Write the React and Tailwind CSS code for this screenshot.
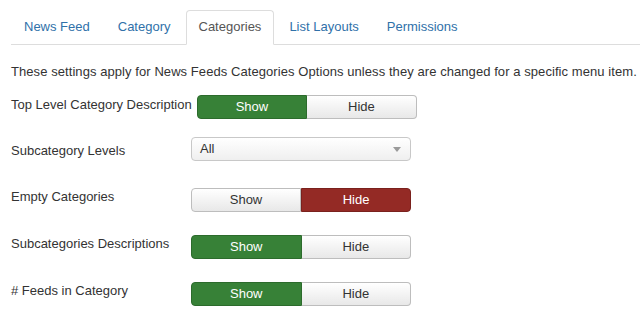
const tabs = ["News Feed", "Category", "Categories", "List Layouts", "Permissions"];

function Toggle({ value }) {
  const on = value === "show";
  return (
    <div className="flex w-[220px] h-[24px] text-[13px]">
      <div
        className={
          on
            ? "flex-1 flex items-center justify-center rounded-l-[4px] border border-[#2c6b2c] bg-[#378137] text-white"
            : "flex-1 flex items-center justify-center rounded-l-[4px] border border-[#bdbdbd] bg-gradient-to-b from-white to-[#e8e8e8] text-[#333]"
        }
      >
        Show
      </div>
      <div
        className={
          !on
            ? "flex-1 flex items-center justify-center rounded-r-[4px] border border-[#7a211d] bg-[#942a25] text-white"
            : "flex-1 flex items-center justify-center rounded-r-[4px] border border-l-0 border-[#bdbdbd] bg-gradient-to-b from-white to-[#e8e8e8] text-[#333]"
        }
      >
        Hide
      </div>
    </div>
  );
}

function Row({ label, className, labelClass, children }) {
  return (
    <div className={"flex items-start " + className}>
      <div className={"min-w-[175px] mr-[5px] whitespace-nowrap leading-[18px] " + labelClass}>
        {label}
      </div>
      {children}
    </div>
  );
}

export default function App() {
  return (
    <div
      className="w-[640px] h-[320px] bg-white text-[13px] text-[#333] overflow-hidden pt-[10px]"
      style={{ fontFamily: '"Liberation Sans", Arial, sans-serif' }}
    >
      {/* TABS */}
      <div className="ml-[11px] flex border-b border-[#ddd] h-[35px]">
        {tabs.map((t) => (
          <div
            key={t}
            className={
              t === "Categories"
                ? "mr-[2px] px-3 pt-[7px] h-[35px] leading-[18px] border border-[#ddd] border-b-white rounded-t-[4px] bg-white text-[#555]"
                : "mr-[2px] px-3 pt-[7px] h-[34px] leading-[18px] border border-transparent text-[#3071a9]"
            }
          >
            {t}
          </div>
        ))}
      </div>

      <div className="pl-[11px]">
        <p className="mt-[18px] leading-[18px] whitespace-nowrap tracking-[0.07px]">
          These settings apply for News Feeds Categories Options unless they are changed for a specific menu item.
        </p>

        <Row label="Top Level Category Description" className="mt-[14px]" labelClass="mt-px">
          <Toggle value="show" />
        </Row>

        <Row label="Subcategory Levels" className="mt-[18px]" labelClass="mt-[5px]">
          <div className="w-[220px] h-[24px] rounded-[4px] border border-[#c8c8c8] bg-gradient-to-b from-white to-[#efefef] flex items-center justify-between pl-[8px] pr-[9px] text-[#333]">
            <span>All</span>
            <svg width="8" height="5" viewBox="0 0 8 5">
              <path d="M0 0 H8 L4 5 Z" fill="#9a9a9a" />
            </svg>
          </div>
        </Row>

        <Row label="Empty Categories" className="mt-[27px]" labelClass="">
          <Toggle value="hide" />
        </Row>

        <Row label="Subcategories Descriptions" className="mt-[23px]" labelClass="">
          <Toggle value="show" />
        </Row>

        <Row label="# Feeds in Category" className="mt-[23px]" labelClass="">
          <Toggle value="show" />
        </Row>
      </div>
    </div>
  );
}
